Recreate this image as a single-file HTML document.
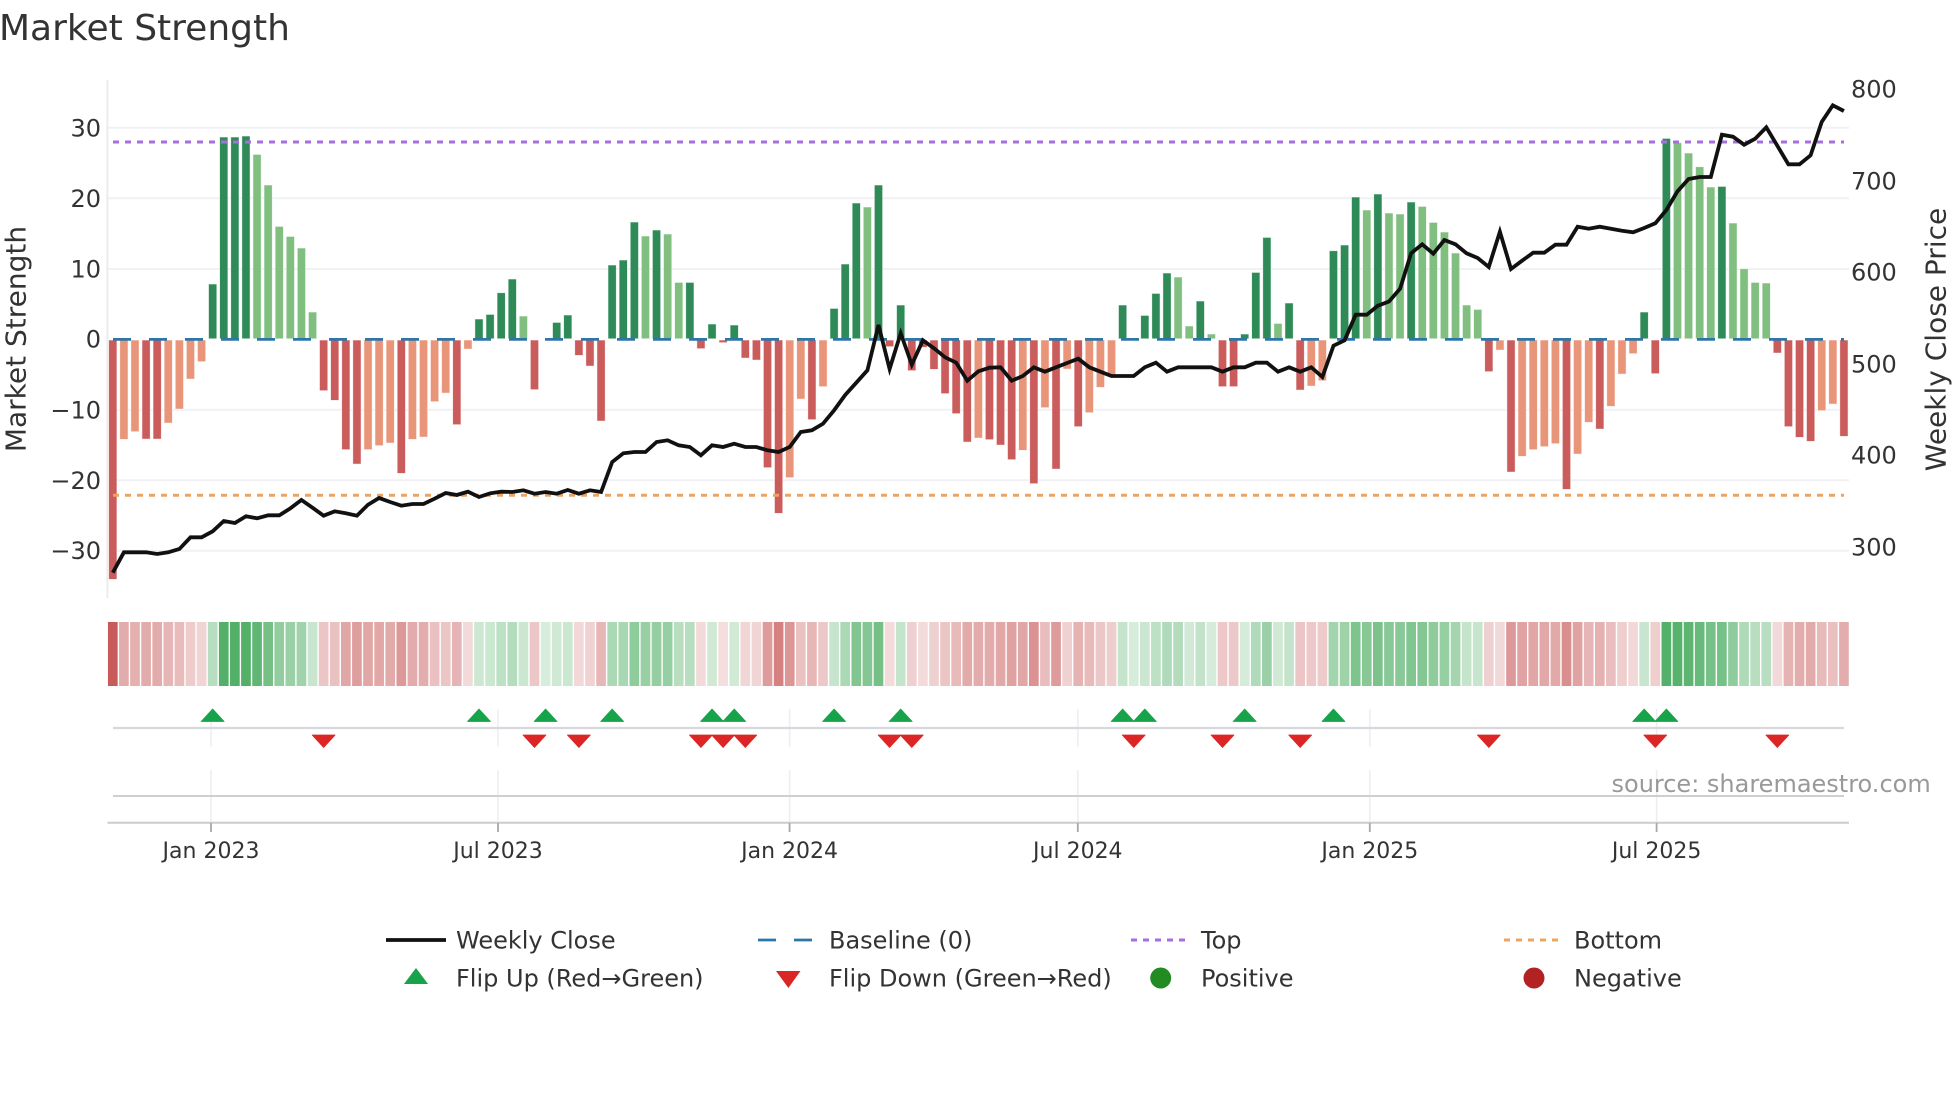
<!DOCTYPE html>
<html lang="en">
<head>
<meta charset="utf-8">
<title>Market Strength</title>
<style>
html,body{margin:0;padding:0;background:#fff;width:1960px;height:1102px;overflow:hidden}
svg{display:block}
text{font-family:"DejaVu Sans","Liberation Sans",sans-serif;fill:#333}
.yt{font-size:24px;text-anchor:end}
.rt{font-size:24px}
.xt{font-size:22px;text-anchor:middle}
.lg{font-size:24px}
</style>
</head>
<body>
<svg id="c" xmlns="http://www.w3.org/2000/svg" width="1960" height="1102" viewBox="0 0 1960 1102">
<rect width="1960" height="1102" fill="#fff"/>
<g stroke="#f0f1f5" stroke-width="2">
<line x1="107" x2="1849" y1="127.8" y2="127.8"/>
<line x1="107" x2="1849" y1="198.3" y2="198.3"/>
<line x1="107" x2="1849" y1="269" y2="269"/>
<line x1="107" x2="1849" y1="409.7" y2="409.7"/>
<line x1="107" x2="1849" y1="480.3" y2="480.3"/>
<line x1="107" x2="1849" y1="550.7" y2="550.7"/>
</g>
<line x1="107.4" x2="107.4" y1="80" y2="598" stroke="#ececf0" stroke-width="2"/>
<g id="bars"></g>
<line x1="113" x2="1844" y1="339.4" y2="339.4" stroke="#2e75a8" stroke-width="2.8" stroke-dasharray="18 18"/>
<line x1="113" x2="1844" y1="142" y2="142" stroke="#a66fdc" stroke-width="3" stroke-dasharray="6 6"/>
<line x1="113" x2="1844" y1="495.3" y2="495.3" stroke="#eca465" stroke-width="3" stroke-dasharray="6 6"/>
<polyline id="price" fill="none" stroke="#111" stroke-width="3.8" stroke-linejoin="miter"/>
<g id="strip"></g>
<g stroke="#eceef2" stroke-width="1.6">
<path d="M211 709V747M211 770V823M498 709V747M498 770V823M789.6 709V747M789.6 770V823M1077.8 709V747M1077.8 770V823M1369.8 709V747M1369.8 770V823M1656.6 709V747M1656.6 770V823"/>
</g>
<line x1="113" x2="1844" y1="728" y2="728" stroke="#d6d8de" stroke-width="2.2"/>
<line x1="113" x2="1844" y1="796" y2="796" stroke="#cfcfcf" stroke-width="2"/>
<line x1="107.5" x2="1849" y1="822.8" y2="822.8" stroke="#cccccc" stroke-width="2"/>
<path d="M211 823V832M498 823V832M789.6 823V832M1077.8 823V832M1369.8 823V832M1656.6 823V832" stroke="#a8a8a8" stroke-width="1.8"/>
<g id="marks"></g>
<text x="-1" y="40" font-size="36" style="fill:#333">Market Strength</text>
<text class="yt" x="101" y="136.3">30</text>
<text class="yt" x="101" y="206.8">20</text>
<text class="yt" x="101" y="277.3">10</text>
<text class="yt" x="101" y="347.6">0</text>
<text class="yt" x="101" y="418.3">−10</text>
<text class="yt" x="101" y="489">−20</text>
<text class="yt" x="101" y="559.2">−30</text>
<text class="rt" x="1851" y="97.7">800</text>
<text class="rt" x="1851" y="189.3">700</text>
<text class="rt" x="1851" y="280.7">600</text>
<text class="rt" x="1851" y="372.3">500</text>
<text class="rt" x="1851" y="463.7">400</text>
<text class="rt" x="1851" y="555.3">300</text>
<text transform="translate(25.5 339) rotate(-90)" font-size="28" text-anchor="middle">Market Strength</text>
<text transform="translate(1945.7 339.5) rotate(-90)" font-size="28" text-anchor="middle">Weekly Close Price</text>
<text class="xt" x="211" y="858">Jan 2023</text>
<text class="xt" x="498" y="858">Jul 2023</text>
<text class="xt" x="789.6" y="858">Jan 2024</text>
<text class="xt" x="1077.8" y="858">Jul 2024</text>
<text class="xt" x="1369.8" y="858">Jan 2025</text>
<text class="xt" x="1656.6" y="858">Jul 2025</text>
<text x="1611.5" y="792" font-size="24" style="fill:#999">source: sharemaestro.com</text>
<line x1="386" x2="446" y1="940" y2="940" stroke="#111" stroke-width="3.8"/>
<line x1="758" x2="818" y1="940" y2="940" stroke="#2e75a8" stroke-width="2.8" stroke-dasharray="18 18"/>
<line x1="1131" x2="1190" y1="940" y2="940" stroke="#a66fdc" stroke-width="3" stroke-dasharray="6 6"/>
<line x1="1504" x2="1563" y1="940" y2="940" stroke="#eca465" stroke-width="3" stroke-dasharray="6 6"/>
<polygon points="416,968 428,984 404,984" fill="#16a34a"/>
<polygon points="776,971 800.5,971 788.4,988" fill="#dc2626"/>
<circle cx="1160.7" cy="978" r="10.5" fill="#228b22"/>
<circle cx="1534" cy="978" r="10.5" fill="#b22222"/>
<text class="lg" x="456" y="948.6">Weekly Close</text>
<text class="lg" x="829" y="948.6">Baseline (0)</text>
<text class="lg" x="1201" y="948.6">Top</text>
<text class="lg" x="1574" y="948.6">Bottom</text>
<text class="lg" x="456" y="986.6">Flip Up (Red→Green)</text>
<text class="lg" x="829" y="986.6">Flip Down (Green→Red)</text>
<text class="lg" x="1201" y="986.6">Positive</text>
<text class="lg" x="1574" y="986.6">Negative</text>
</svg>
<script>
(function(){
var NS="http://www.w3.org/2000/svg";
var h=[-240,-100,-92.3,-99.7,-99.7,-83.7,-69.7,-39.7,-22.3,55.4,
202.4,202.4,203.4,185,154.4,113,103,91.4,27.4,-51.3,
-61,-110.3,-124.7,-110.3,-106.3,-103.7,-134,-100,-97.7,-62.3,
-53.7,-85.3,-9.7,20.4,25,46.7,60.4,23.4,-50.3,0,
17,24.4,-16,-26.7,-81.7,74.4,79.4,117.4,103.4,109.4,
105.4,57,57,-9.3,15.4,-3.3,14.4,-18.7,-20.7,-128.3,
-174,-138.3,-59.7,-80.3,-47.3,31,75.4,136.4,132.4,154.4,
-7.3,34.4,-31.3,-8,-30,-54.3,-74.3,-102.7,-98.7,-100.3,
-105.7,-120.3,-111,-144.3,-68.3,-129.7,-29.7,-87.3,-73.3,-48,
-37,34.4,0,24,46,66.4,62.4,13.4,38.4,5.4,
-47.3,-47.3,5.4,67,102,16,36.4,-50.7,-46.7,-41.3,
88.7,94.4,142.4,129.4,145.4,126.4,125.4,137.4,133,117,
107.4,86.4,34.4,30,-32.3,-10.7,-132.7,-117,-110.3,-107.3,
-104.3,-150,-114.7,-83,-89.7,-67,-34.7,-14.3,27.4,-34.3,
201,196.7,186.4,172.7,152.4,153,116.4,70.7,57,56.4,
-13.7,-87.3,-98,-102,-71.3,-64.7,-97];
var t="dllddlllld"+"dddlllllld"+"dddllldlll"+"ldlddddldd"+"ddddddddld"+"lldddddddd"+"dlldldddld"+"ddddddddld"+"ddldldldll"+"ldddddlldl"+"dddddlddll"+"dddldlldll"+"lllldldlll"+"ldlldllldd"+"dlllldllll"+"ddddlld";
var p=[572.7,552.3,552.3,552.3,554,552.3,549,537.3,537.3,531.3,
521,523,516.3,518.3,515.3,515.3,508.3,500,507.7,515.7,
511.3,513.3,515.7,504.7,498,502,505.7,504,504,498.7,
493,495,491.7,497,493.3,491.7,492,490.3,493.7,492,
493.7,490,493.7,490.3,492,462,453.3,452,452,442,
440.3,445.3,447,455.3,445.3,447,443.7,447,447,450.3,
452,447,432,430.3,423.7,410.3,395,382.7,370.3,325,
369,333.3,364.7,340.3,348.3,357.3,362.7,380.7,371.3,367.7,
367.3,380.7,376,367.3,371.7,367.3,363,358.7,367.3,371.7,
376,376,376,367.3,362.7,371.7,367.3,367.3,367.3,367.3,
371.7,367.3,367.3,362.7,362.7,371.7,367.3,371.7,367.3,377,
345.7,340.3,314.7,314.7,305.7,301.5,288.7,253.3,244.3,253.7,
240,244.3,253.3,258,267,231.7,269,260.7,252.7,252.7,
244.7,244.7,226.7,228.7,226.7,228.7,230.7,232.3,228,223.3,
210,191.3,179,177,177,134.7,136.7,144.7,138.7,127.3,
145.7,164.3,164.3,155.3,122,105.3,111];
var P=11.097,X0=112.8,Z=339.4;
function cx(i){return X0+P*i}
function el(n,a){var e=document.createElementNS(NS,n);for(var k in a)e.setAttribute(k,a[k]);return e}
var bars=document.getElementById("bars"),strip=document.getElementById("strip");
var pts=[];
for(var i=0;i<h.length;i++){
  var v=h[i],x=cx(i),d=t.charAt(i)==="d";
  if(v!==0){
    var col=v>0?(d?"#2e8b57":"#81bf81"):(d?"#cb5c5c":"#e8957a");
    var y=v>0?Z-v:Z+0.6,ht=v>0?v-0.6:-v-0.6;
    bars.appendChild(el("rect",{x:(x-4.15).toFixed(2),y:y.toFixed(2),width:8.3,height:ht.toFixed(2),fill:col,stroke:"#fff","stroke-width":0.8,"stroke-opacity":0.7}));
  }
  var a=0.2+0.8*Math.pow(Math.abs(v)/240,1.1);
  var green=v>=0;
  strip.appendChild(el("rect",{x:(x-4.85).toFixed(2),y:622,width:9.7,height:64,fill:green?"rgb(56,164,80)":"rgb(200,90,90)","fill-opacity":a.toFixed(3)}));
  pts.push(x.toFixed(1)+","+p[i]);
}
document.getElementById("price").setAttribute("points",pts.join(" "));
var m=document.getElementById("marks");
[9,33,39,45,54,56,65,71,91,93,102,110,138,140].forEach(function(i){
  var x=cx(i);
  m.appendChild(el("polygon",{points:(x)+",709 "+(x+11.5)+",721.5 "+(x-11.5)+",721.5",fill:"#16a34a",stroke:"#16a34a","stroke-width":0.8,"stroke-linejoin":"round"}));
});
[19,38,42,53,55,57,70,72,92,100,107,124,139,150].forEach(function(i){
  var x=cx(i);
  m.appendChild(el("polygon",{points:(x-11.5)+",735 "+(x+11.5)+",735 "+(x)+",747.5",fill:"#dc2626",stroke:"#dc2626","stroke-width":0.8,"stroke-linejoin":"round"}));
});
})();
</script>
</body>
</html>
